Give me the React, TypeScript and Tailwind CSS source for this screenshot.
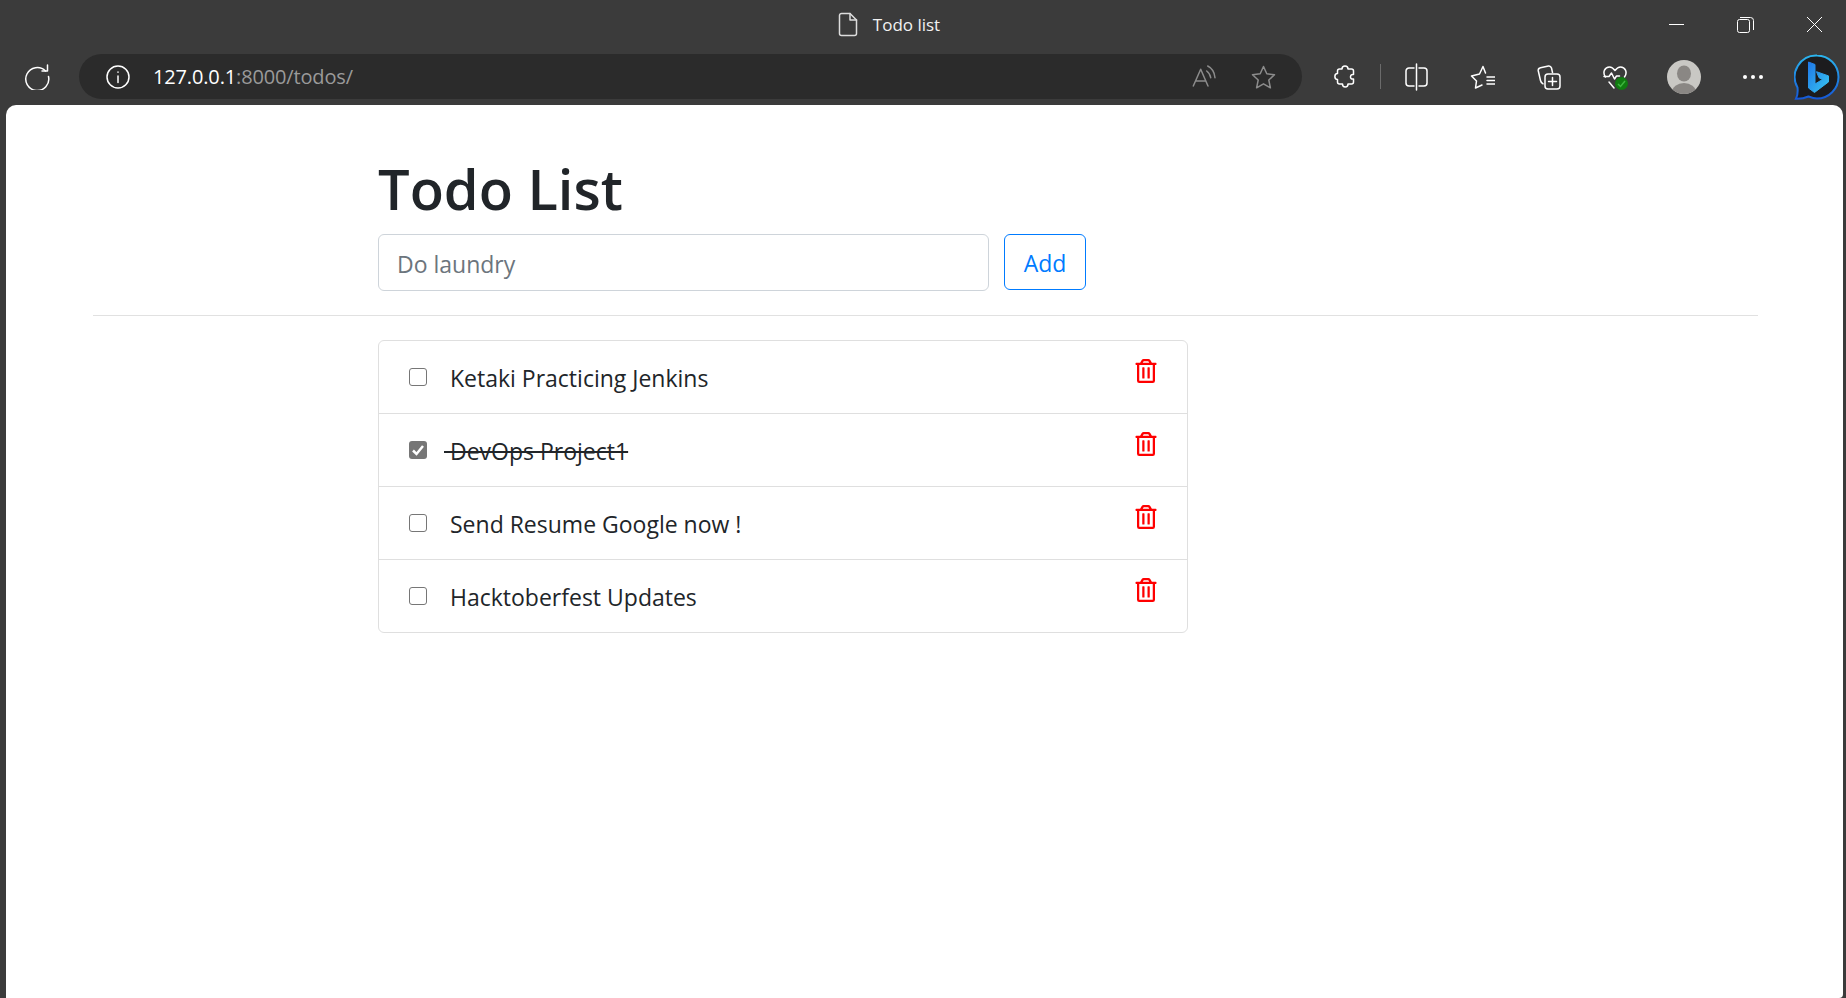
import React from 'react';
import { FaRegTrashAlt } from 'react-icons/fa';

const todos = [
  { title: 'Ketaki Practicing Jenkins', done: false },
  { title: 'DevOps Project1', done: true },
  { title: 'Send Resume Google now !', done: false },
  { title: 'Hacktoberfest Updates', done: false },
];

const stroke = { fill: 'none', stroke: 'currentColor', strokeWidth: 1.5, strokeLinecap: 'round', strokeLinejoin: 'round' } as const;

const BingLogo = () => (
  <svg width="46" height="46" viewBox="0 0 46 46">
    <defs>
      <linearGradient id="bingB" x1="0" y1="0" x2="1" y2="1">
        <stop offset="0" stopColor="#1f78e8" />
        <stop offset="1" stopColor="#38c6f0" />
      </linearGradient>
      <linearGradient id="bingRing" x1="0" y1="0" x2="0" y2="1">
        <stop offset="0" stopColor="#2bb5ee" />
        <stop offset="1" stopColor="#1558d6" />
      </linearGradient>
    </defs>
    <path d="M23 1.500A21.500 21.500 0 1 1 23 44.500C19.500 44.500 17 43.500 14.500 42.500C11 44 6 45 2 44.800C3.500 42 4 38.500 3.500 33.500A21.500 21.500 0 0 1 23 1.500Z" fill="#1c1c1e" stroke="url(#bingRing)" strokeWidth="2" />
    <path d="M14.500 8l6.500 2.500V30l7.500-4.500-3.500-1.800-2.500-6 12 4.200v6L20.500 38.500 14.500 34Z" fill="url(#bingB)" stroke="url(#bingB)" strokeLinejoin="round" />
  </svg>
);

const Avatar = () => (
  <svg width="34" height="34" viewBox="0 0 34 34">
    <clipPath id="avatarClip"><circle cx="17" cy="17" r="17" /></clipPath>
    <circle cx="17" cy="17" r="17" fill="#c9c8c4" />
    <g clipPath="url(#avatarClip)" fill="#8a8784">
      <ellipse cx="17" cy="13.500" rx="7" ry="8" />
      <ellipse cx="17" cy="32" rx="12" ry="9" />
    </g>
  </svg>
);

const Toolbar = () => (
  <div className="flex h-[56px] items-start pt-[5px] text-white">
    <div className="flex h-[45px] items-center">
      <svg className="ml-[24px]" width="26" height="26" viewBox="0 0 26 26" {...stroke}>
        <path d="M21.500 7A11.500 11.500 0 1 0 24.500 12.500" />
        <path d="M23.500 1v6H18" />
      </svg>
    </div>

    <div className="ml-[29px] flex h-[45px] w-[1223px] items-center rounded-full bg-[#2b2b2b]">
      <svg className="ml-[27px]" width="24" height="24" viewBox="0 0 24 24" {...stroke}>
        <circle cx="12" cy="12" r="11" />
        <path d="M12 11v6.500" />
        <path d="M12 7v.2" />
      </svg>
      <span className="ml-[23px] text-[20px] leading-none tracking-[-0.15px]">
        127.0.0.1<span className="text-[#9a9a9a]">:8000/todos/</span>
      </span>
      <svg className="ml-auto text-[#8c8c8c]" width="25" height="24" viewBox="0 0 25 24" {...stroke}>
        <path d="M1.300 21L8.700 4.300 16 21M4 16h9.500" />
        <path d="M14.700 6C16.700 7.500 18.200 9.500 18.700 12.700M15.700 1C19.700 3 22.500 7 23 12.700" />
      </svg>
      <svg className="ml-[34px] mr-[26px] text-[#8c8c8c]" width="25" height="24" viewBox="0 0 25 24" {...stroke}>
        <path d="M12.500 1.500l3.300 7.300 7.700.9-5.700 5.300 1.600 7.800-6.900-4-6.900 4 1.600-7.800-5.700-5.300 7.700-.9Z" />
      </svg>
    </div>

    <div className="flex h-[45px] items-center">
      <svg className="ml-[32px]" width="23" height="25" viewBox="0 0 23 25" {...stroke}>
        <path d="M8 5C8 1 14 1 14 5H17.500C18.600 5 19.500 5.900 19.500 7V10.500C16 9.500 15 16 19.500 15V18C19.500 19.100 18.600 20 17.500 20H14C14 24 8.500 24 8.500 20H5.500C4.400 20 3.500 19.100 3.500 18V15.500C0 15.500 0 9.500 3.500 9.500V7C3.500 5.900 4.400 5 5.500 5Z" />
      </svg>
      <div className="ml-[23px] h-[25px] w-px bg-[#6b6b6b]" />
      <svg className="ml-[24px]" width="23" height="28" viewBox="0 0 23 28" {...stroke}>
        <path d="M9 5H4a3 3 0 0 0-3 3v12a3 3 0 0 0 3 3h5M14 5h5a3 3 0 0 1 3 3v12a3 3 0 0 1-3 3h-5M11.500 1v26" />
      </svg>
      <svg className="ml-[42px]" width="25" height="24" viewBox="0 0 25 24" {...stroke}>
        <path d="M15.500 8L13 1.500 9.500 9 1.500 11 6.500 16 5.500 23 12 20" />
        <path d="M17 12h8M17 15.500h8M17 19h8" />
      </svg>
      <svg className="ml-[42px]" width="24" height="26" viewBox="0 0 24 26" {...stroke}>
        <path d="M15.500 8.500L14.500 4C14 2.500 13 1.800 11.500 2L3.500 3.800C1.800 4.200 1 5.500 1.300 7L3.500 16.500C3.800 18 4.500 19 6 19.800" />
        <rect x="8" y="10" width="15" height="15" rx="3" />
        <path d="M15.500 13.500v8M11.500 17.500h8" />
      </svg>
      <div className="relative ml-[42px] h-[26px] w-[24px]">
        <svg width="24" height="26" viewBox="0 0 24 26" {...stroke}>
          <path d="M2.500 13C-1 8 2 3 6.500 3c2.500 0 4 1.500 5.500 3.500C13.500 4.500 15 3 17.500 3 22 3 25 8 21.500 13" />
          <path d="M1 12.500h5l2.500-3.500 3 6 2-3h3M6 18l5 6" />
        </svg>
        <div className="absolute bottom-0 right-[-1px] flex h-[13px] w-[13px] items-center justify-center rounded-full bg-[#107c10]">
          <svg width="9" height="9" viewBox="0 0 9 9" fill="none" stroke="#3fb63f" strokeWidth="1.500">
            <path d="M1 5l2.500 2.500L8 2" />
          </svg>
        </div>
      </div>
      <div className="ml-[40px] flex"><Avatar /></div>
      <div className="ml-[42px] flex gap-[4px]">
        <span className="h-[4px] w-[4px] rounded-full bg-white" />
        <span className="h-[4px] w-[4px] rounded-full bg-white" />
        <span className="h-[4px] w-[4px] rounded-full bg-white" />
      </div>
      <div className="ml-[31px] flex"><BingLogo /></div>
    </div>
  </div>
);

const TitleBar = () => (
  <div className="grid h-[49px] grid-cols-[1fr_auto_1fr] items-center text-white">
    <div />
    <div className="mr-[68px] flex items-center gap-[15px]">
      <svg width="20" height="25" viewBox="0 0 20 25" {...stroke} className="text-[#dddddd]">
        <path d="M3.500 1.500H12L18.500 8v13.500a2 2 0 0 1-2 2h-13a2 2 0 0 1-2-2v-18a2 2 0 0 1 2-2Z" />
        <path d="M12 1.500V8h6.500" />
      </svg>
      <span className="text-[17px] leading-none text-[#f2f2f2]">Todo list</span>
    </div>
    <div className="flex items-center justify-end">
      <div className="h-px w-[15px] bg-white" />
      <svg className="ml-[53px]" width="17" height="16" viewBox="0 0 17 16" fill="none" stroke="currentColor">
        <rect x="0.500" y="2.500" width="12" height="13" rx="2" />
        <path d="M3 .5h10.500a3 3 0 0 1 3 3V13" />
      </svg>
      <svg className="ml-[53px] mr-[24px]" width="15" height="15" viewBox="0 0 15 15" stroke="currentColor">
        <path d="M0 0l15 15M15 0L0 15" />
      </svg>
    </div>
  </div>
);

const TodoRow = ({ title, done }: { title: string; done: boolean }) => (
  <li className="flex items-start border-t border-[#dfdfdf] pb-[18px] pl-[30px] pr-[29px] pt-[18px] first:border-t-0">
    <div className="flex h-[36px] items-center">
      {done ? (
        <div className="flex h-[18px] w-[18px] items-center justify-center rounded-[3px] bg-[#767676]">
          <svg width="14" height="14" viewBox="0 0 14 14" fill="none" stroke="white" strokeWidth="2.500">
            <path d="M2 7.500l3.500 3.500L12 3" />
          </svg>
        </div>
      ) : (
        <div className="h-[18px] w-[18px] rounded-[3px] border-[1.500px] border-[#767676] bg-white" />
      )}
    </div>
    {done ? (
      <span className="ml-[17px] whitespace-pre pt-[3px] text-[23px] leading-[33px] line-through decoration-2">{` ${title}`}</span>
    ) : (
      <span className="ml-[23px] pt-[3px] text-[23px] leading-[33px]">{title}</span>
    )}
    <FaRegTrashAlt className="ml-auto text-[#ff0000]" size={24} />
  </li>
);

const App = () => {
  return (
    <div className="flex h-screen flex-col overflow-hidden bg-[#3b3b3b] font-['Open_Sans','Noto_Sans',sans-serif]">
      <TitleBar />
      <Toolbar />
      <main className="ml-[6px] mr-[3px] flex-1 rounded-t-[10px] rounded-br-[4px] bg-white text-[#212529]">
        <div className="ml-[87px] mr-[85px] pt-[48px]">
          <div className="pl-[285px]">
            <h1 className="text-[56px] font-semibold leading-[70px]">Todo List</h1>
            <form className="flex items-start gap-[15px] pt-[11px]">
              <input
                className="h-[57px] w-[611px] rounded-[6px] border border-[#ced4da] px-[18px] pt-[2px] text-[23px] outline-none placeholder:text-[#6c757d]"
                placeholder="Do laundry"
              />
              <button type="button" className="h-[56px] w-[82px] rounded-[6px] border border-[#007bff] pt-[2px] text-[23px] text-[#007bff]">
                Add
              </button>
            </form>
          </div>
          <hr className="mt-[24px] border-[#e1e1e1]" />
          <div className="pl-[285px] pt-[24px]">
            <ul className="w-[810px] rounded-[6px] border border-[#dfdfdf]">
              {todos.map((todo) => (
                <TodoRow key={todo.title} title={todo.title} done={todo.done} />
              ))}
            </ul>
          </div>
        </div>
      </main>
    </div>
  );
};

export default App;
